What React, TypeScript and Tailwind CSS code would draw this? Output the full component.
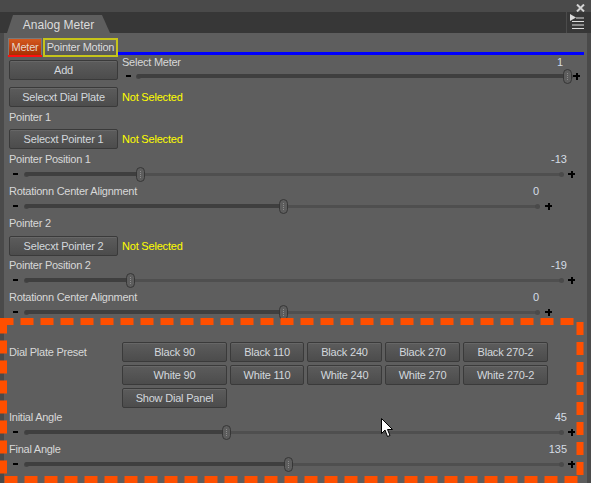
import React from 'react'

const label = "text-[11px] tracking-[-0.25px] text-[#d8d8d8] leading-none"

function Btn({ className = '', children }: { className?: string; children: React.ReactNode }) {
  return (
    <div
      className={
        "h-[20px] flex items-center justify-center shrink-0 rounded-[2px] border border-[#3a3a3a] bg-linear-to-b from-[#5c5c5c] to-[#4c4c4c] shadow-[inset_0_1px_0_rgba(255,255,255,0.07)] text-[11px] tracking-[-0.2px] text-[#d3d8dd] " +
        className
      }
    >
      {children}
    </div>
  )
}

// thumb / start given in page px so the data reads like the screenshot
function Slider({ start, thumb, trackClass, plusClass, minusClass }: {
  start: number
  thumb: number
  trackClass: string
  plusClass: string
  minusClass: string
}) {
  const off = thumb - start
  return (
    <div className="h-[16px] flex items-center pb-[2px]">
      <div className={"flex items-center " + minusClass}>
        <div className="w-[5px] h-[2px] bg-black" />
      </div>
      <div className={"relative h-[5px] flex items-center " + trackClass}>
        <div className="absolute left-0 right-0 h-[3px] rounded-full bg-[#4f4f4f]" />
        <div className="absolute left-[-1px] w-[5px] h-[5px] rounded-full bg-[#444]" />
        <div className="absolute right-[-1px] w-[5px] h-[5px] rounded-full bg-[#4a4a4a]" />
        <div className="absolute left-0 h-[4px] rounded-full bg-[#3f3f3f]" style={{ width: off }} />
        <div
          className="absolute top-[-5px] w-[9px] h-[15px] rounded-full border border-[#363636] bg-[#5d5d5d] flex items-center justify-center"
          style={{ left: off - 4.5 }}
        >
          <div className="h-[7px] border-l border-dotted border-[#8c8c8c]" />
        </div>
      </div>
      <div className={"relative w-[7px] h-[7px] " + plusClass}>
        <div className="absolute left-0 top-[2.5px] w-[7px] h-[2px] bg-black" />
        <div className="absolute left-[2.5px] top-0 w-[2px] h-[7px] bg-black" />
      </div>
    </div>
  )
}

function LabelRow({ name, value, className }: { name: string; value?: string; className: string }) {
  return (
    <div className={"h-[16px] flex items-center justify-between " + className}>
      <span className={label}>{name}</span>
      {value && <span className="text-[11px] text-[#d5dde6] leading-none">{value}</span>}
    </div>
  )
}

const presetsTop = ['Black 90', 'Black 110', 'Black 240', 'Black 270', 'Black 270-2']
const presetsBottom = ['White 90', 'White 110', 'White 240', 'White 270', 'White 270-2']
const widths = ['w-[105px]', 'w-[74px]', 'w-[75px]', 'w-[75px]', 'w-[85px]']

export default function App() {
  return (
    <div className="relative w-[591px] h-[483px] overflow-hidden bg-[#4a4a4a] font-['Liberation_Sans',Arial,sans-serif]">
      {/* title strip */}
      <div className="h-[12px] flex justify-end pr-[6px] pt-[4px]">
        <svg width="9" height="8" viewBox="0 0 9 8">
          <path d="M1 0.5 L8 7.5 M8 0.5 L1 7.5" stroke="#d4d4d4" strokeWidth="2" />
        </svg>
      </div>

      {/* panel tab bar */}
      <div className="h-[21px] bg-[#373737] flex items-end justify-between">
        <div className="ml-[7px] h-[18px] w-[103px] rounded-t-[4px] bg-[#5e5e5e] [clip-path:polygon(6px_0,calc(100%-8px)_0,100%_100%,0_100%)] flex items-center justify-center text-[12px] text-[#dcdcdc] pt-[1px]">
          Analog Meter
        </div>
        <div className="h-[21px] w-[25px] border-l border-[#4b4b4b] pl-[2px] pt-[1px]">
          <svg width="16" height="19" viewBox="0 0 16 19">
            <path d="M1 1 L7 4.5 L1 8 Z" fill="#dcdcdc" />
            <path d="M7 5 H15 M3 8.5 H15 M3 12 H15 M3 15.5 H15" stroke="#dcdcdc" strokeWidth="1.2" />
          </svg>
        </div>
      </div>

      {/* body */}
      <div className="ml-[4px] w-[583px] h-[450px] bg-[#5e5e5e] pl-[5px] pr-[3px]">
        {/* sub tabs */}
        <div className="pt-[5px] h-[24px] flex -ml-[1px]">
          <div className="relative w-[34px] h-[19px] border border-[#7a7a7a] bg-linear-to-b from-[#d4581e] to-[#a62c00] flex items-center justify-center text-[11px] tracking-[-0.25px] text-[#e8d8c8]">
            Meter
            <div className="absolute left-[-1px] right-[-1px] bottom-[-1px] h-[2px] bg-[#ff1010]" />
          </div>
          <div className="w-[75px] h-[19px] ml-[1px] border-2 border-[#c6c41a] bg-linear-to-b from-[#6c6c6c] to-[#585858] flex items-center justify-center text-[11px] tracking-[-0.25px] text-[#dcdcdc]">
            Pointer Motion
          </div>
          <div className="flex-1 mt-[14px] h-[3px] bg-[#0000ff]" />
        </div>

        {/* add / select meter */}
        <div className="h-[29px] flex -mt-[1px]">
          <Btn className="w-[109px] mt-[4px]">Add</Btn>
          <div className="ml-[4px]">
            <div className="h-[13px] w-[441px] flex items-center justify-between">
              <span className={label}>Select Meter</span>
              <span className="text-[11px] text-[#d5dde6] leading-none">1</span>
            </div>
            <div className="pl-[4px]">
              <Slider start={137} thumb={567} minusClass="w-[11px]" trackClass="w-[435px]" plusClass="ml-[1px]" />
            </div>
          </div>
        </div>

        <div className="mt-[2px] h-[20px] flex items-center">
          <Btn className="w-[109px]">Selecxt Dial Plate</Btn>
          <span className="ml-[4px] text-[11px] tracking-[-0.2px] text-[#ffff00]">Not Selected</span>
        </div>

        <div className="mt-[2px] h-[16px] flex items-center">
          <span className={label}>Pointer 1</span>
        </div>
        <div className="mt-[4px] h-[20px] flex items-center">
          <Btn className="w-[109px]">Selecxt Pointer 1</Btn>
          <span className="ml-[4px] text-[11px] tracking-[-0.2px] text-[#ffff00]">Not Selected</span>
        </div>

        <LabelRow name="Pointer Position 1" value="-13" className="mt-[2px] w-[558px]" />
        <div className="pl-[4px]">
          <Slider start={25} thumb={140} minusClass="w-[12px]" trackClass="w-[538px]" plusClass="ml-[5px]" />
        </div>
        <LabelRow name="Rotationn Center Alignment" value="0" className="w-[530px]" />
        <div className="pl-[4px]">
          <Slider start={25} thumb={283} minusClass="w-[12px]" trackClass="w-[514px]" plusClass="ml-[6px]" />
        </div>

        <div className="h-[16px] flex items-center">
          <span className={label}>Pointer 2</span>
        </div>
        <div className="mt-[5px] h-[20px] flex items-center">
          <Btn className="w-[109px]">Selecxt Pointer 2</Btn>
          <span className="ml-[4px] text-[11px] tracking-[-0.2px] text-[#ffff00]">Not Selected</span>
        </div>

        <LabelRow name="Pointer Position 2" value="-19" className="mt-[1px] w-[558px]" />
        <div className="pl-[4px]">
          <Slider start={25} thumb={130} minusClass="w-[12px]" trackClass="w-[538px]" plusClass="ml-[5px]" />
        </div>
        <LabelRow name="Rotationn Center Alignment" value="0" className="w-[530px]" />
        <div className="pl-[4px]">
          <Slider start={25} thumb={283} minusClass="w-[12px]" trackClass="w-[514px]" plusClass="ml-[6px]" />
        </div>

        {/* dial plate presets */}
        <div className="mt-[21px] flex">
          <div className="w-[113px] h-[20px] flex items-center">
            <span className={label}>Dial Plate Preset</span>
          </div>
          <div className="flex flex-col gap-[3px]">
            <div className="flex gap-[3px]">
              {presetsTop.map((p, i) => (
                <Btn key={p} className={widths[i]}>{p}</Btn>
              ))}
            </div>
            <div className="flex gap-[3px]">
              {presetsBottom.map((p, i) => (
                <Btn key={p} className={widths[i]}>{p}</Btn>
              ))}
            </div>
            <Btn className="w-[105px]">Show Dial Panel</Btn>
          </div>
        </div>

        <LabelRow name="Initial Angle" value="45" className="mt-[1px] w-[558px]" />
        <div className="pl-[4px]">
          <Slider start={25} thumb={226} minusClass="w-[12px]" trackClass="w-[538px]" plusClass="ml-[5px]" />
        </div>
        <LabelRow name="Final Angle" value="135" className="w-[558px]" />
        <div className="pl-[4px]">
          <Slider start={25} thumb={288} minusClass="w-[12px]" trackClass="w-[538px]" plusClass="ml-[5px]" />
        </div>
      </div>

      {/* highlight annotation */}
      <svg className="absolute left-0 top-[318px] pointer-events-none" width="585" height="166" viewBox="0 0 585 166">
        <rect x="3.5" y="3.5" width="576.5" height="158" fill="none" stroke="#ff4f00" strokeWidth="7" strokeDasharray="13 7" strokeDashoffset="3" />
      </svg>

      {/* mouse cursor */}
      <svg className="absolute left-[381px] top-[418px] pointer-events-none" width="13" height="20" viewBox="0 0 13 20">
        <path d="M0.5 0.5 L0.5 15.5 L4 12 L6.5 18.5 L9 17.5 L6.5 11.5 L11.5 11.5 Z" fill="#fff" stroke="#000" strokeWidth="1" strokeLinejoin="miter" />
      </svg>
    </div>
  )
}
